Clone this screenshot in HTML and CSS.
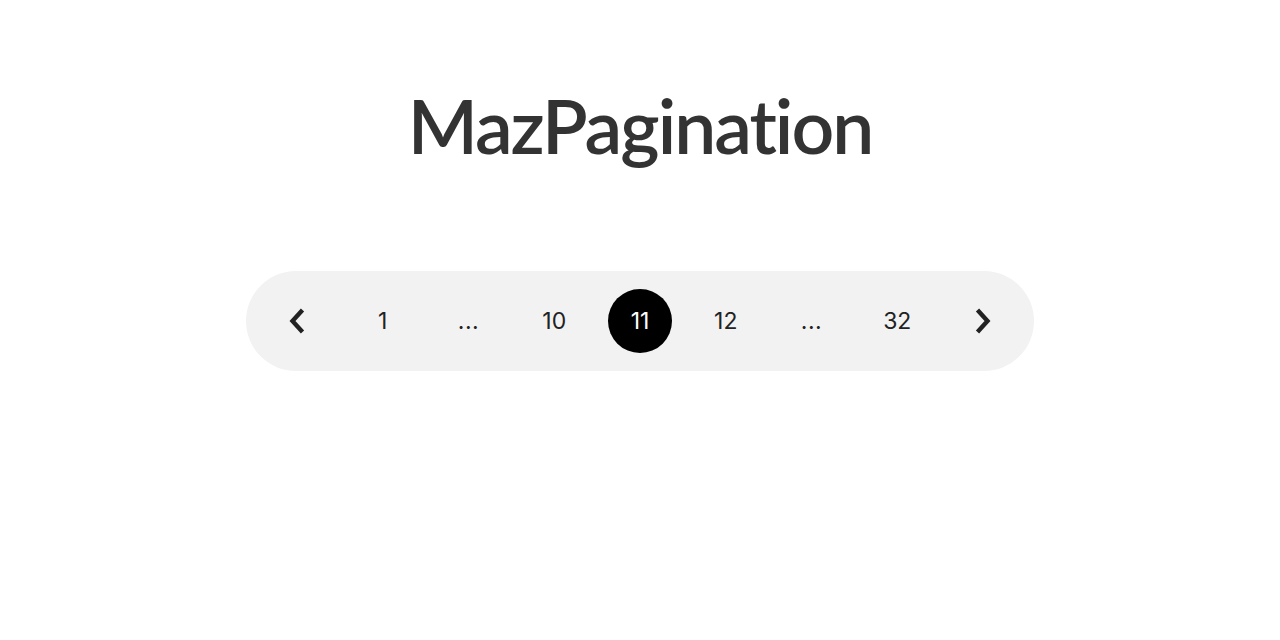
FILE: index.html
```html
<!DOCTYPE html>
<html lang="en">
<head>
<meta charset="utf-8">
<title>MazPagination</title>
<link rel="stylesheet" href="styles.css">
</head>
<body>
<main class="page">
  <h1 class="title">MazPagination</h1>
  <nav class="pagination" aria-label="Pagination">
    <button class="item arrow" aria-label="Previous page">
      <svg width="20" height="28" viewBox="0 0 20 28" fill="none"><path d="M15.5 3 L5.5 14 L15.5 25" stroke="#222" stroke-width="4.4" stroke-linecap="butt" stroke-linejoin="miter"/></svg>
    </button>
    <button class="item">1</button>
    <span class="item dots">...</span>
    <button class="item">10</button>
    <button class="item active">11</button>
    <button class="item">12</button>
    <span class="item dots">...</span>
    <button class="item">32</button>
    <button class="item arrow" aria-label="Next page">
      <svg width="20" height="28" viewBox="0 0 20 28" fill="none"><path d="M4.5 3 L14.5 14 L4.5 25" stroke="#222" stroke-width="4.4" stroke-linecap="butt" stroke-linejoin="miter"/></svg>
    </button>
  </nav>
</main>
</body>
</html>
```

FILE: styles.css
```css
* { box-sizing: border-box; }
html, body { margin: 0; padding: 0; background: #ffffff; }
.page {
  display: flex;
  flex-direction: column;
  align-items: center;
  padding-top: 80px;
}
.title {
  margin: 0;
  font-family: Lato, "Noto Sans", sans-serif;
  font-weight: 600;
  font-size: 75px;
  line-height: 90px;
  color: #333333;
  letter-spacing: -2px;
}
.pagination {
  margin-top: 101px;
  display: flex;
  align-items: center;
  gap: 21.75px;
  padding: 18px 19px;
  background: #f2f2f2;
  border-radius: 50px;
}
.item {
  width: 64px;
  height: 64px;
  border: 0;
  padding: 0;
  margin: 0;
  border-radius: 50%;
  background: transparent;
  display: flex;
  align-items: center;
  justify-content: center;
  font-family: Inter, "Noto Sans", sans-serif;
  font-size: 23px;
  color: #222222;
  cursor: pointer;
}
.item.active {
  background: #000000;
  color: #ffffff;
}
.dots { cursor: default; letter-spacing: 0.5px; }
.arrow svg { display: block; }
```
